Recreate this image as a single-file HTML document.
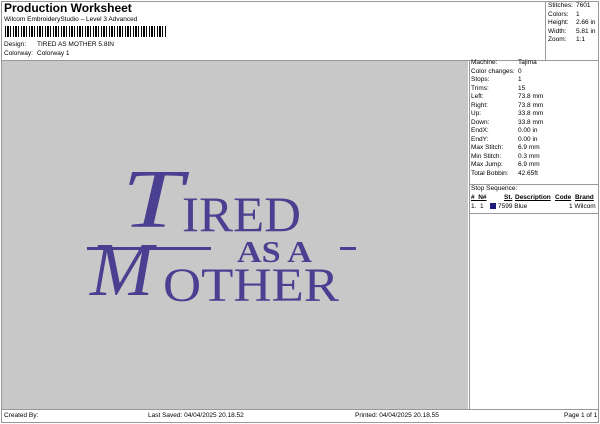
<!DOCTYPE html>
<html><head><style>
*{margin:0;padding:0;box-sizing:border-box}
body{width:600px;height:424px;background:#fff;font-family:"Liberation Sans",sans-serif;color:#000;position:relative;overflow:hidden}
.a{position:absolute;white-space:nowrap}
.s{font-size:6.5px;line-height:8.5px}
.p{color:#4a3f90;font-family:"Liberation Serif",serif}
</style></head><body>
<div class="a" style="left:1px;top:1px;width:598px;height:422px;border:1px solid #999"></div>
<div class="a" style="left:4px;top:1px;font-size:12px;font-weight:bold">Production Worksheet</div>
<div class="a s" style="left:4px;top:16px">Wilcom EmbroideryStudio – Level 3 Advanced</div>
<div class="a" style="left:5px;top:26px;width:162px;height:11px;background:repeating-linear-gradient(90deg,#000 0 1px,#fff 1px 2px,#000 2px 4px,#fff 4px 5px,#000 5px 6px,#fff 6px 8px)"></div>
<div class="a s" style="left:4px;top:41px">Design:</div><div class="a s" style="left:37px;top:41px">TIRED AS MOTHER 5.8IN</div>
<div class="a s" style="left:4px;top:50px">Colorway:</div><div class="a s" style="left:37px;top:50px">Colorway 1</div>
<div class="a" style="left:545px;top:1px;width:1px;height:59px;background:#999"></div>
<div class="a s" style="left:548px;top:2px">Stitches:<br>Colors:<br>Height:<br>Width:<br>Zoom:</div>
<div class="a s" style="left:576px;top:2px">7601<br>1<br>2.66 in<br>5.81 in<br>1:1</div>
<div class="a" style="left:2px;top:60px;width:596px;height:1px;background:#999"></div>
<div class="a" style="left:2px;top:61px;width:466px;height:348px;background:#c8c8c8"></div>
<div class="a" style="left:469px;top:61px;width:1px;height:348px;background:#999"></div>
<div class="a s" style="left:471px;top:59px">Machine:<br>Color changes:<br>Stops:<br>Trims:<br>Left:<br>Right:<br>Up:<br>Down:<br>EndX:<br>EndY:<br>Max Stitch:<br>Min Stitch:<br>Max Jump:<br>Total Bobbin:</div>
<div class="a s" style="left:518px;top:59px">Tajima<br>0<br>1<br>15<br>73.8 mm<br>73.8 mm<br>33.8 mm<br>33.8 mm<br>0.00 in<br>0.00 in<br>6.9 mm<br>0.3 mm<br>6.9 mm<br>42.65ft</div>
<div class="a" style="left:470px;top:184px;width:128px;height:1px;background:#999"></div>
<div class="a s" style="left:471px;top:185px">Stop Sequence:</div>
<div class="a s" style="left:471px;top:194px;font-weight:bold;text-decoration:underline">#&nbsp; N#</div>
<div class="a s" style="left:504px;top:194px;font-weight:bold;text-decoration:underline">St.</div>
<div class="a s" style="left:515px;top:194px;font-weight:bold;text-decoration:underline">Description</div>
<div class="a s" style="left:555px;top:194px;font-weight:bold;text-decoration:underline">Code</div>
<div class="a s" style="left:575px;top:194px;font-weight:bold;text-decoration:underline">Brand</div>
<div class="a s" style="left:471px;top:203px">1.&nbsp; 1</div>
<div class="a" style="left:490px;top:203px;width:6px;height:6px;background:#1c1a7a"></div>
<div class="a s" style="left:498px;top:203px">7599 Blue</div>
<div class="a s" style="left:569px;top:203px">1 Wilcom</div>
<div class="a" style="left:470px;top:213px;width:128px;height:1px;background:#999"></div>
<div class="a" style="left:2px;top:409px;width:596px;height:1px;background:#999"></div>
<div class="a s" style="left:4px;top:412px">Created By:</div>
<div class="a s" style="left:148px;top:412px">Last Saved: 04/04/2025 20.18.52</div>
<div class="a s" style="left:355px;top:412px">Printed: 04/04/2025 20.18.55</div>
<div class="a s" style="left:564px;top:412px">Page 1 of 1</div>
<!-- design -->
<div class="a p" style="left:122px;top:158px;font-size:84px;font-style:italic;line-height:84px;transform:scaleX(1.3);transform-origin:left">T</div>
<div class="a p" style="left:182px;top:189px;font-size:50px;line-height:50px;transform:scaleX(1.02);transform-origin:left">IRED</div>
<div class="a p" style="left:237px;top:236px;font-size:31px;line-height:31px;font-weight:bold;transform:scaleX(1.1);transform-origin:left">AS A</div>
<div class="a" style="left:87px;top:247px;width:124px;height:3px;background:#4a3f90"></div>
<div class="a" style="left:340px;top:247px;width:16px;height:3px;background:#4a3f90"></div>
<div class="a p" style="left:90px;top:232px;font-size:76px;font-style:italic;line-height:76px">M</div>
<div class="a p" style="left:163px;top:262px;font-size:48px;line-height:48px;transform:scaleX(1.1);transform-origin:left">OTHER</div>
</body></html>
